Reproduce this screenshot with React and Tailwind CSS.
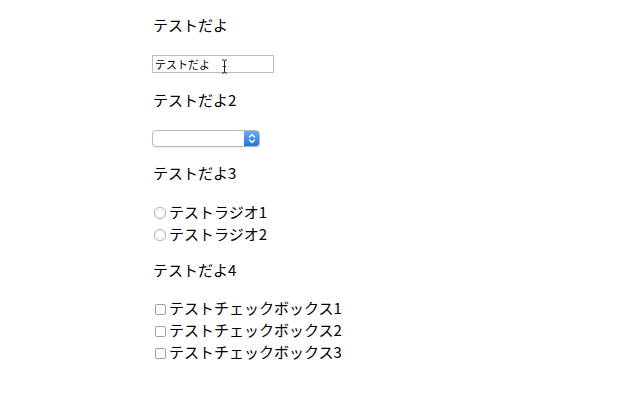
function Label({ children, className = "" }) {
    return <div className={`h-[22px] leading-[22px] text-[15px] text-black ${className}`}>{children}</div>;
}

function Radio({ label }) {
    return (
        <div className="flex items-center h-[22px] text-[15px] text-black">
            <span className="w-[12px] h-[12px] rounded-full border border-[#a9a9a9] bg-white ml-px mr-[3px] mt-[2px]" />
            <span className="leading-[22px]">{label}</span>
        </div>
    );
}

function Check({ label }) {
    return (
        <div className="flex items-center h-[22px] text-[15px] text-black">
            <span className="w-[11px] h-[11px] rounded-[2px] border border-[#a0a0a0] bg-white ml-[2px] mr-[3px] mt-[2px]" />
            <span className="leading-[22px]">{label}</span>
        </div>
    );
}

export default function App() {
    return (
        <div
            className="w-[640px] h-[400px] bg-white flex flex-col items-start pt-[14px] pl-[153px]"
            style={{ fontFamily: '"Noto Sans CJK JP", "Noto Sans", sans-serif' }}
        >
            <Label>テストだよ</Label>

            <div className="relative mt-[19px] -ml-px">
                <div className="w-[122px] h-[18px] border border-[#bdbdbd] bg-white flex items-center pl-[2px] text-[11px] leading-none text-black">
                    テストだよ
                </div>
                <svg className="absolute left-[69px] top-[4px]" width="7" height="15" viewBox="0 0 7 15">
                    <path d="M1 1h2l0.5 0.5L4 1h2M3.5 1.5v12M1 14h2l0.5-0.5L4 14h2M2 7.5h3" stroke="#222" strokeWidth="1" fill="none" />
                </svg>
            </div>

            <Label className="mt-[16px]">テストだよ2</Label>

            <div className="mt-[19px] -ml-px w-[108px] h-[17px] rounded-[4px] border border-[#b8b8b8] bg-white flex justify-end overflow-hidden shadow-[0_1px_1px_rgba(0,0,0,0.08)]">
                <div className="w-[15px] h-full bg-gradient-to-b from-[#6aa9f7] to-[#1f6fe6] flex items-center justify-center">
                    <svg width="8" height="11" viewBox="0 0 8 11">
                        <path d="M1.5 4L4 1.5L6.5 4M1.5 7L4 9.5L6.5 7" stroke="white" strokeWidth="1.4" fill="none" strokeLinecap="round" strokeLinejoin="round" />
                    </svg>
                </div>
            </div>

            <Label className="mt-[15px]">テストだよ3</Label>

            <div className="mt-[17px] flex flex-col">
                <Radio label="テストラジオ1" />
                <Radio label="テストラジオ2" />
            </div>

            <Label className="mt-[14px]">テストだよ4</Label>

            <div className="mt-[16px] flex flex-col">
                <Check label="テストチェックボックス1" />
                <Check label="テストチェックボックス2" />
                <Check label="テストチェックボックス3" />
            </div>
        </div>
    );
}
